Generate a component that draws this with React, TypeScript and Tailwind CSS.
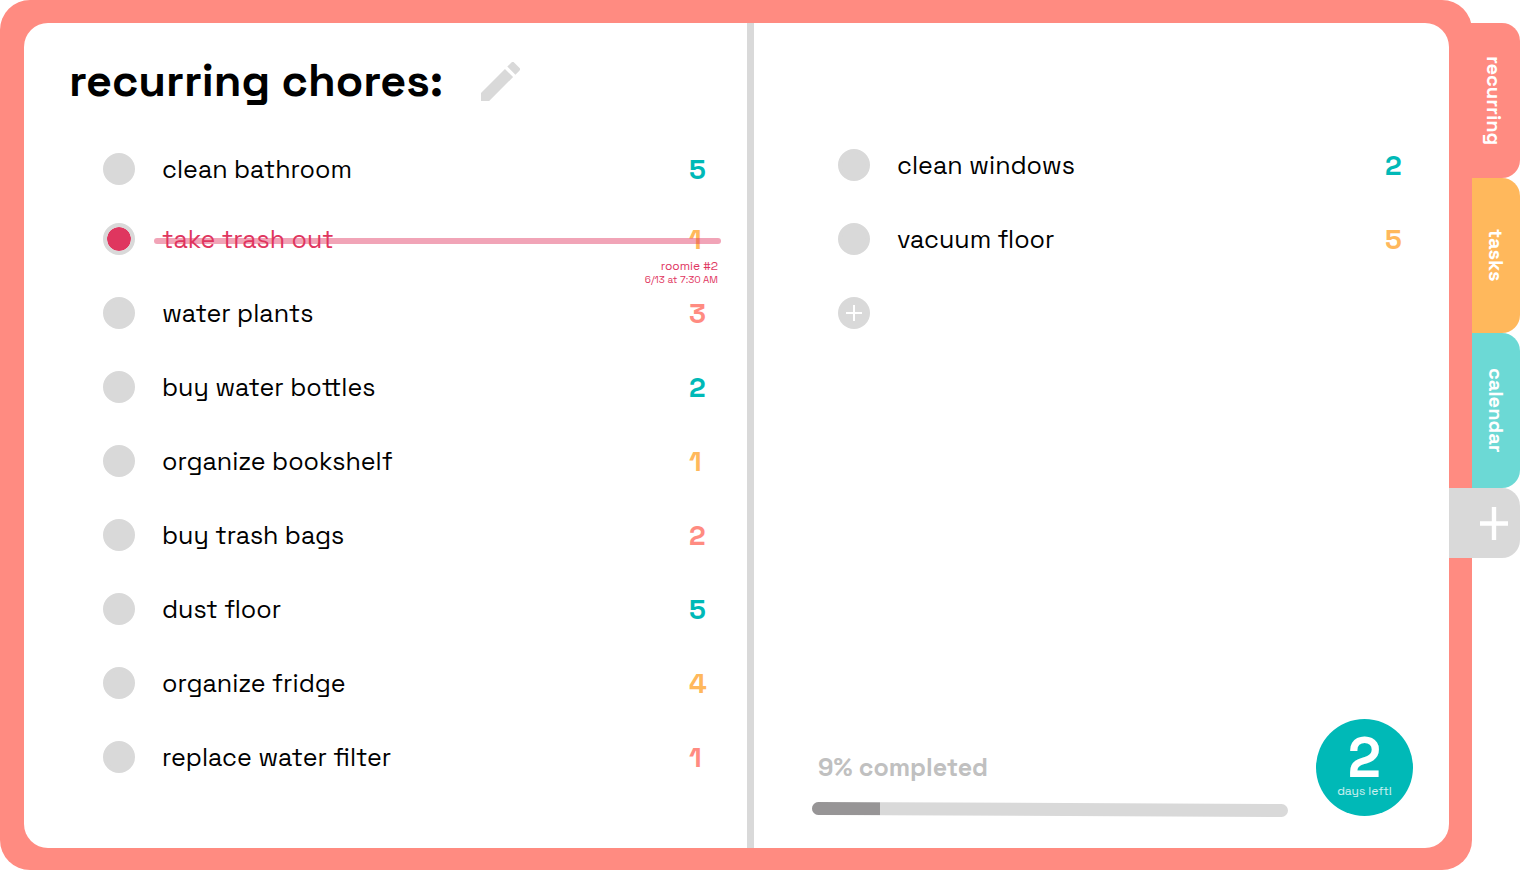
import { useState } from "react";

type Tone = "teal" | "orange" | "coral";

type Chore = {
  id: string;
  label: string;
  count: number;
  tone: Tone;
  done?: boolean;
  doneBy?: string;
  doneAt?: string;
};

const toneClass: Record<Tone, string> = {
  teal: "text-[#00b9b7]",
  orange: "text-[#ffb85c]",
  coral: "text-[#ff8b81]",
};

const leftChores: Chore[] = [
  { id: "bathroom", label: "clean bathroom", count: 5, tone: "teal" },
  {
    id: "trash",
    label: "take trash out",
    count: 1,
    tone: "orange",
    done: true,
    doneBy: "roomie #2",
    doneAt: "6/13 at 7:30 AM",
  },
  { id: "plants", label: "water plants", count: 3, tone: "coral" },
  { id: "bottles", label: "buy water bottles", count: 2, tone: "teal" },
  { id: "bookshelf", label: "organize bookshelf", count: 1, tone: "orange" },
  { id: "bags", label: "buy trash bags", count: 2, tone: "coral" },
  { id: "dust", label: "dust floor", count: 5, tone: "teal" },
  { id: "fridge", label: "organize fridge", count: 4, tone: "orange" },
  { id: "filter", label: "replace water filter", count: 1, tone: "coral" },
];

const rightChores: Chore[] = [
  { id: "windows", label: "clean windows", count: 2, tone: "teal" },
  { id: "vacuum", label: "vacuum floor", count: 5, tone: "orange" },
];

// The active tab overlaps the cover so that the two read as one shape.
const tabs = [
  { label: "recurring", style: "bg-[#ff8b81] -ml-1" },
  { label: "tasks", style: "bg-[#ffb85c]" },
  { label: "calendar", style: "bg-[#6cd9d5]" },
];

function ChoreRow({ chore }: { chore: Chore }) {
  const [done, setDone] = useState(Boolean(chore.done));
  return (
    <li
      className={`relative flex h-8 items-center gap-[27px] first:mt-0 ${
        chore.done ? "mt-[38px]" : "mt-[42px]"
      }`}
    >
      <input
        id={chore.id}
        type="checkbox"
        checked={done}
        onChange={() => setDone(!done)}
        className="size-8 shrink-0 cursor-pointer appearance-none rounded-full border-4 border-[#d9d9d9] bg-[#d9d9d9] checked:bg-[#df365f] checked:bg-clip-padding"
      />
      <label
        htmlFor={chore.id}
        className={`flex-1 cursor-pointer whitespace-nowrap text-[25px] leading-8 ${
          done ? "text-[#df365f]" : "text-black"
        }`}
      >
        {chore.label}
      </label>
      <span className={`w-4 text-[28px] font-bold leading-8 ${toneClass[chore.tone]}`}>
        {chore.count}
      </span>
      {done && (
        <>
          <span className="absolute -right-4 left-[51px] top-[15px] h-1.5 rounded-full bg-[#df365f]/45" />
          {chore.doneBy && (
            <span className="absolute -right-[13px] top-9 text-right text-[#df365f]">
              <span className="block text-xs leading-[14px]">{chore.doneBy}</span>
              <span className="block text-[10px] leading-[14px]">{chore.doneAt}</span>
            </span>
          )}
        </>
      )}
    </li>
  );
}

export default function App() {
  return (
    <div className="flex min-h-screen bg-white font-['Space_Grotesk',Inter,sans-serif] text-black">
      <main className="flex flex-1 rounded-[30px] bg-[#ff8b81] pb-[22px] pl-6 pr-[23px] pt-[23px]">
        <div className="grid flex-1 grid-cols-[723fr_7px_695fr] rounded-3xl bg-white">
          <section className="pb-12 pl-[79px] pr-[42px] pt-[30px]">
            <header className="-ml-[34px] flex h-14 items-center gap-[38px]">
              <h1 className="whitespace-nowrap text-[45px] font-bold leading-[56px]">
                recurring chores:
              </h1>
              <button type="button" aria-label="Edit chores" className="cursor-pointer text-[#d9d9d9]">
                <svg viewBox="3 3 18 18" className="size-[39px]" fill="currentColor">
                  <path d="M3 17.25V21h3.75L17.81 9.94l-3.75-3.75L3 17.25zM20.71 7.04a1 1 0 0 0 0-1.41l-2.34-2.34a1 1 0 0 0-1.41 0l-1.83 1.83 3.75 3.75 1.83-1.83z" />
                </svg>
              </button>
            </header>
            <ul className="mt-11">
              {leftChores.map((chore) => (
                <ChoreRow key={chore.id} chore={chore} />
              ))}
            </ul>
          </section>

          <div className="bg-[#d9d9d9]" />

          <section className="flex flex-col pb-8 pr-9 pt-[126px]">
            <ul className="pl-[84px] pr-3">
              {rightChores.map((chore) => (
                <ChoreRow key={chore.id} chore={chore} />
              ))}
              <li className="mt-[42px] h-8">
                <button
                  type="button"
                  aria-label="Add chore"
                  className="flex size-8 cursor-pointer items-center justify-center rounded-full bg-[#d9d9d9]"
                >
                  <svg viewBox="0 0 16 16" className="size-4" stroke="#fff" strokeWidth="2">
                    <path d="M8 0v16M0 8h16" />
                  </svg>
                </button>
              </li>
            </ul>

            <footer className="mt-auto flex items-end gap-7 pl-[58px]">
              <div className="flex-1">
                <p id="progress-label" className="pl-1.5 text-[25px] font-semibold leading-8 text-[#c0c0c0]">
                  9% completed
                </p>
                <div
                  role="progressbar"
                  aria-labelledby="progress-label"
                  aria-valuenow={9}
                  className="mt-5 h-[13px] rotate-[0.24deg] overflow-hidden rounded-full bg-[#d9d9d9]"
                >
                  <div className="h-full w-1/7 bg-[#979596]" />
                </div>
              </div>
              <div className="flex size-[97px] flex-col items-center justify-center rounded-full bg-[#00b9b7] pb-1 text-white">
                <span className="text-[56px] font-bold leading-[50px]">2</span>
                <span className="text-xs leading-4 text-white/80">days left!</span>
              </div>
            </footer>
          </section>
        </div>
      </main>

      <nav aria-label="Sections" className="flex w-12 flex-col pt-[23px]">
        {tabs.map((tab) => (
          <a
            key={tab.label}
            href={`#${tab.label}`}
            className={`flex h-[155px] items-center justify-center rounded-r-[18px] text-xl font-semibold leading-6 text-white [writing-mode:vertical-rl] ${tab.style}`}
          >
            {tab.label}
          </a>
        ))}
        <button
          type="button"
          aria-label="Add section"
          className="-ml-[23px] flex h-[70px] cursor-pointer items-center justify-end rounded-r-[18px] bg-[#d9d9d9] pr-3"
        >
          <svg viewBox="0 0 28 33" className="h-[33px] w-7" fill="none" stroke="#fff" strokeWidth="4.4">
            <path d="M14 0v33M0 16.5h28" />
          </svg>
        </button>
      </nav>
    </div>
  );
}
